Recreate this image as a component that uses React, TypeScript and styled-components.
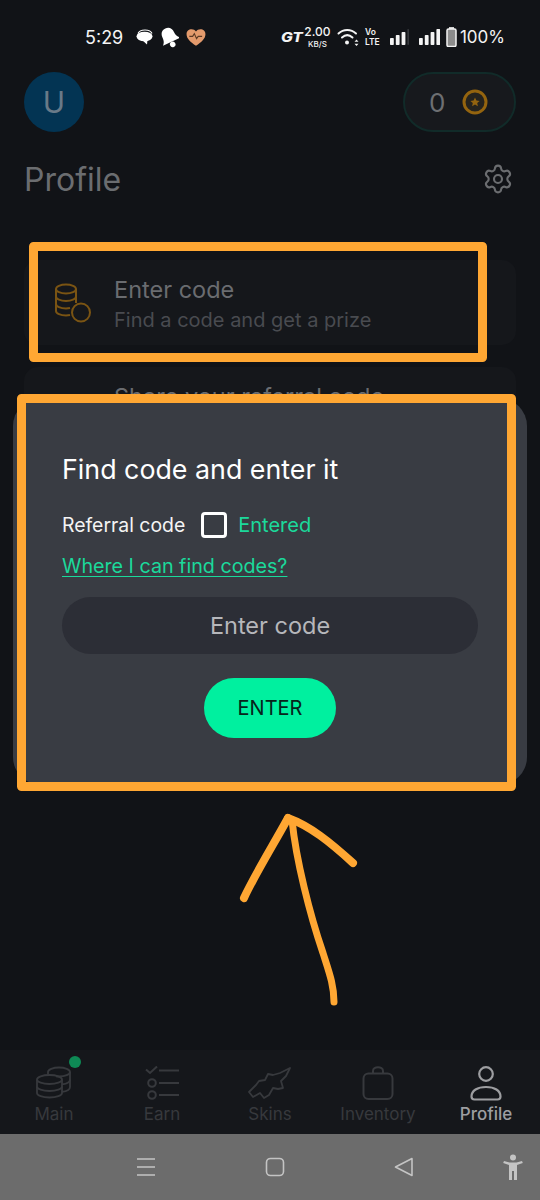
import React from 'react'
import styled, { createGlobalStyle } from 'styled-components'
import { Settings } from 'lucide-react'

const GlobalStyle = createGlobalStyle`
  html, body { margin: 0; padding: 0; background: #111317; }
  * { box-sizing: border-box; }
`

const Page = styled.div`
  position: relative;
  width: 540px;
  height: 1200px;
  overflow: hidden;
  display: flex;
  flex-direction: column;
  background: #111317;
  font-family: 'Inter', 'Noto Sans', sans-serif;
`

const StatusBar = styled.div`
  height: 72px;
  flex: none;
  padding: 26px 35px 0 85px;
  display: flex;
  justify-content: space-between;
  align-items: flex-start;
  color: #f4f4f4;
`
const StatusGroup = styled.div`
  display: flex;
  align-items: center;
  height: 22px;
`
const StatusSlot = styled.span<{ $ml: number }>`
  display: flex;
  align-items: center;
  margin-left: ${(p) => p.$ml}px;
`
const Clock = styled.span`
  font-size: 18px;
`
const BatteryText = styled.span`
  font-size: 17px;
`
const GtMark = styled.span`
  width: 21px;
  font-size: 13px;
  font-style: italic;
  font-weight: 800;
  transform: scaleX(1.2);
  transform-origin: left center;
`
const Speed = styled.div`
  display: flex;
  flex-direction: column;
  align-items: center;
  width: 25px;
  font-size: 12px;
  line-height: 14.5px;
  font-weight: 500;
  small {
    font-size: 8px;
    line-height: 10px;
  }
`
const VoLte = styled.div`
  width: 18px;
  display: flex;
  flex-direction: column;
  font-size: 8.5px;
  line-height: 10.5px;
  font-weight: 600;
`

const Header = styled.div`
  height: 60px;
  flex: none;
  padding: 0 24px;
  display: flex;
  justify-content: space-between;
  align-items: center;
`
const Avatar = styled.div`
  width: 60px;
  height: 60px;
  border-radius: 50%;
  background: #033453;
  color: #697a88;
  font-size: 30px;
  display: flex;
  align-items: center;
  justify-content: center;
`
const Points = styled.div`
  width: 113px;
  height: 60px;
  border-radius: 30px;
  border: 2px solid #112b29;
  background: #17191d;
  padding-left: 24px;
  display: flex;
  align-items: center;
  gap: 17px;
  color: #6d6f72;
  font-size: 26px;
`

const TitleRow = styled.div`
  margin-top: 27px;
  height: 40px;
  flex: none;
  padding: 0 26px 0 24px;
  display: flex;
  justify-content: space-between;
  align-items: center;
  color: #6b6d70;
`
const Title = styled.h1`
  margin: 0;
  font-size: 32px;
  font-weight: 400;
  color: #6b6d70;
`

const CardList = styled.div`
  margin-top: 61px;
  padding: 0 24px;
  display: flex;
  flex-direction: column;
  gap: 22px;
`
const Card = styled.div`
  height: 85px;
  border-radius: 14px;
  background: #15171b;
  padding-left: 30px;
  display: flex;
  align-items: center;
  gap: 22px;
`
const CardIconSlot = styled.div`
  width: 38px;
  height: 40px;
  flex: none;
`
const CardText = styled.div`
  padding-top: 3px;
  display: flex;
  flex-direction: column;
  gap: 3px;
`
const CardTitle = styled.div`
  font-size: 23.5px;
  line-height: 28px;
  color: #6a6c70;
`
const CardSub = styled.div`
  font-size: 20px;
  line-height: 26px;
  color: #494b50;
`

const Sheet = styled.div`
  position: absolute;
  left: 13px;
  top: 398px;
  width: 514px;
  height: 387px;
  border-radius: 28px;
  background: #393c43;
  padding: 52px 49px 0;
  display: flex;
  flex-direction: column;
`
const SheetTitle = styled.h2`
  margin: 0;
  font-size: 26.8px;
  line-height: 38px;
  font-weight: 400;
  color: #ffffff;
`
const CodeRow = styled.div`
  margin-top: 23px;
  height: 28px;
  display: flex;
  align-items: center;
  color: #f4f4f4;
  font-size: 19.4px;
`
const CheckBox = styled.span`
  width: 26px;
  height: 26px;
  margin: 0 11px 0 16px;
  border: 3px solid #ffffff;
  border-radius: 4px;
`
const Entered = styled.span`
  color: #1bd99b;
  font-size: 20px;
`
const HelpLink = styled.a`
  margin-top: 13px;
  font-size: 19.7px;
  line-height: 28px;
  color: #1bd99b;
  text-decoration: underline;
  text-underline-offset: 3px;
  align-self: flex-start;
`
const CodeField = styled.div`
  margin-top: 17px;
  width: 416px;
  height: 57px;
  border-radius: 29px;
  background: #2c2e36;
  color: #b6b7bb;
  font-size: 23.5px;
  display: flex;
  align-items: center;
  justify-content: center;
`
const EnterButton = styled.button`
  margin: 24px auto 0;
  width: 132px;
  height: 60px;
  border: 0;
  border-radius: 30px;
  background: #00f09f;
  color: #07251b;
  font-family: inherit;
  font-size: 20px;
`

const Annotations = styled.svg`
  position: absolute;
  left: 0;
  top: 0;
  width: 540px;
  height: 1200px;
  pointer-events: none;
`

const NavBar = styled.nav`
  margin-top: auto;
  height: 84px;
  flex: none;
  background: #15171b;
  display: grid;
  grid-template-columns: repeat(5, 108px);
`
const NavItem = styled.div<{ $active?: boolean }>`
  position: relative;
  padding-top: 16px;
  display: flex;
  flex-direction: column;
  align-items: center;
  color: ${(p) => (p.$active ? '#9d9ea1' : '#37393d')};
  font-size: 17px;
  font-weight: ${(p) => (p.$active ? 500 : 400)};
  svg { height: 36px; width: 44px; }
`
const NavDot = styled.span`
  position: absolute;
  left: 69px;
  top: 6px;
  width: 12px;
  height: 12px;
  border-radius: 50%;
  background: #0e8a55;
`
const NavLabel = styled.span`
  line-height: 24px;
`

const SystemBar = styled.div`
  height: 66px;
  flex: none;
  background: #6c6c6c;
  color: #c4c4c4;
  padding-left: 136px;
  display: flex;
  align-items: center;
  gap: 109px;
  svg:last-child { margin-left: -20px; }
`

const Bubble = () => (
  <svg width="17" height="16" viewBox="0 0 17 16">
    <path d="M2 4.500C3 2 5.500 1 9 1s6 1 7 3.500" fill="none" stroke="#fff" strokeWidth="1.200" />
    <ellipse cx="8.500" cy="7.500" rx="8" ry="4.800" fill="#fff" />
    <path d="M6 11h5.500l-.5 4.500z" fill="#fff" />
  </svg>
)

const Bell = () => (
  <svg width="19" height="21" viewBox="1 1 16 18">
    <g transform="rotate(-25 9 10)" fill="#fff">
      <path d="M9 1.500c3.500 0 5.500 2.500 5.500 6 0 3 1 4.500 3 6.500H1c2-2 2.500-3.500 2.500-6.500 0-3.500 2-6 5.500-6z" />
      <circle cx="9" cy="16.500" r="2.400" />
    </g>
  </svg>
)

const Heart = () => (
  <svg width="20" height="19" viewBox="0 0 18 16">
    <path d="M9 15.500C4 12 .5 9 .5 5 .5 2 2.500.5 5 .5c1.700 0 3 .8 4 2 1-1.200 2.300-2 4-2 2.500 0 4.500 1.500 4.500 4.500 0 4-3.500 7-8.500 10.500z" fill="#e39a6c" />
    <path d="M3 7h3l1.500-2.500L9.500 9l1.500-2h3.500" fill="none" stroke="#5c3a24" strokeWidth="1" />
  </svg>
)

const Wifi = () => (
  <svg width="22" height="19" viewBox="0 0 22 19" fill="none" stroke="#f4f4f4" strokeLinecap="round">
    <path d="M1.500 5.500C6.500 .8 14 .8 19 5.500" strokeWidth="2" />
    <path d="M5 9.500C8.300 6.500 12.200 6.500 15.500 9.500" strokeWidth="2" />
    <circle cx="10" cy="14.500" r="2" fill="#f4f4f4" stroke="none" />
    <path d="M19.500 11.500l-2 2.200h4zM19.500 18l-2-2.200h4z" fill="#f4f4f4" stroke="none" />
  </svg>
)

const Signal = ({ lit }: { lit: number }) => (
  <svg width="21" height="16" viewBox="0 0 21 16">
    {[0, 1, 2, 3].map((i) => (
      <rect
        key={i}
        x={i * 5.8}
        y={9 - i * 3}
        width={i < lit ? 3.8 : 1.5}
        height={7 + i * 3}
        rx="0.8"
        fill={i < lit ? '#f4f4f4' : '#3a3c40'}
      />
    ))}
  </svg>
)

const BatteryIcon = () => (
  <svg width="11" height="20" viewBox="0 0 11 20">
    <rect x="3" y="0" width="5" height="2" fill="#cfcfcf" />
    <rect x="1" y="2" width="9" height="17.500" rx="1.500" fill="#8b8b8b" stroke="#f4f4f4" strokeWidth="1.500" />
  </svg>
)

const StarCoin = () => (
  <svg width="26" height="26" viewBox="0 0 26 26">
    <circle cx="13" cy="13" r="11" fill="#25231e" stroke="#94640f" strokeWidth="3" />
    <path d="M13 8.500l1.400 3 3.200.4-2.400 2.100.7 3.200-2.900-1.600-2.900 1.600.7-3.200-2.400-2.100 3.200-.4z" fill="#94640f" />
  </svg>
)

const CoinsIcon = () => (
  <svg width="38" height="40" viewBox="0 0 38 40" fill="none" stroke="#7a5413" strokeWidth="2">
    <ellipse cx="12" cy="6" rx="10" ry="4.500" />
    <path d="M2 6v22c0 2.500 4.500 4.500 10 4.500 1.500 0 2.500-.1 4-.4" />
    <path d="M22 6v14" />
    <path d="M2 13.500c0 2.500 4.500 4.500 10 4.500s10-2 10-4.500" />
    <path d="M2 21c0 2.500 4.500 4.500 10 4.500 1.500 0 2.500-.1 4-.4" />
    <circle cx="27" cy="29.500" r="9" />
  </svg>
)

const MainIcon = () => (
  <svg viewBox="0 0 44 36" fill="none" stroke="currentColor" strokeWidth="1.800">
    <path d="M16 8.500V6c0-2.500 5-4.500 11-4.500S38 3.500 38 6s-5 4.500-11 4.500c-1 0-2-.1-3-.2" />
    <path d="M38 6v15c0 2.500-3 4.300-8 4.800" />
    <path d="M38 13.500c0 2.500-3 4.300-8 4.800" />
    <ellipse cx="17.500" cy="13.500" rx="12.500" ry="4.500" />
    <path d="M5 13.500V27c0 2.500 5.500 4.500 12.500 4.500S30 29.500 30 27V13.500" />
    <path d="M5 20.500c0 2.500 5.500 4.500 12.500 4.500S30 23 30 20.500" />
  </svg>
)

const EarnIcon = () => (
  <svg viewBox="0 0 44 36" fill="none" stroke="currentColor" strokeWidth="2">
    <path d="M6 3.500L10 7l7-6.500" />
    <path d="M19 4.500h20M19 17h20M19 29h20" />
    <circle cx="12" cy="17" r="3.800" />
    <circle cx="12" cy="29" r="3.800" />
  </svg>
)

const SkinsIcon = () => (
  <svg viewBox="0 0 44 36" fill="none" stroke="currentColor" strokeWidth="1.800" strokeLinejoin="round">
    <path d="M42 2L38 10L33 15L35 22L30 23L25 22L21 29L16 32L12 27L5 31L1 26L8 19L11 15L17 14L20 8L25 9L32 7z" />
  </svg>
)

const BagIcon = () => (
  <svg viewBox="0 0 44 36" fill="none" stroke="currentColor" strokeWidth="2">
    <rect x="7.500" y="7.500" width="29" height="25.500" rx="5" />
    <path d="M17 7.500V5c0-5 10-5 10 0v2.500" />
  </svg>
)

const PersonIcon = () => (
  <svg viewBox="0 0 44 36" fill="none" stroke="currentColor" strokeWidth="2.200">
    <circle cx="22" cy="8" r="6.800" />
    <path d="M7.500 30.500c0-6 6-9.500 14.500-9.500s14.500 3.500 14.500 9.500c0 2-1 3-3 3h-23c-2 0-3-1-3-3z" />
  </svg>
)

const App: React.FC = () => {
  return (
    <Page>
      <GlobalStyle />
      <StatusBar>
        <StatusGroup>
          <Clock>5:29</Clock>
          <StatusSlot $ml={13}><Bubble /></StatusSlot>
          <StatusSlot $ml={7}><Bell /></StatusSlot>
          <StatusSlot $ml={7}><Heart /></StatusSlot>
        </StatusGroup>
        <StatusGroup>
          <GtMark>GT</GtMark>
          <StatusSlot $ml={3}>
            <Speed>
              2.00
              <small>KB/S</small>
            </Speed>
          </StatusSlot>
          <StatusSlot $ml={7}><Wifi /></StatusSlot>
          <StatusSlot $ml={6}>
            <VoLte>
              <span>Vo</span>
              <span>LTE</span>
            </VoLte>
          </StatusSlot>
          <StatusSlot $ml={7}><Signal lit={3} /></StatusSlot>
          <StatusSlot $ml={8}><Signal lit={4} /></StatusSlot>
          <StatusSlot $ml={6}><BatteryIcon /></StatusSlot>
          <StatusSlot $ml={3}><BatteryText>100%</BatteryText></StatusSlot>
        </StatusGroup>
      </StatusBar>

      <Header>
        <Avatar>U</Avatar>
        <Points>
          0
          <StarCoin />
        </Points>
      </Header>

      <TitleRow>
        <Title>Profile</Title>
        <Settings size={32} strokeWidth={1.6} />
      </TitleRow>

      <CardList>
        <Card>
          <CardIconSlot>
            <CoinsIcon />
          </CardIconSlot>
          <CardText>
            <CardTitle>Enter code</CardTitle>
            <CardSub>Find a code and get a prize</CardSub>
          </CardText>
        </Card>
        <Card>
          <CardIconSlot />
          <CardText>
            <CardTitle>Share your referral code</CardTitle>
            <CardSub>Invite a friend</CardSub>
          </CardText>
        </Card>
      </CardList>

      <NavBar>
        <NavItem>
          <NavDot />
          <MainIcon />
          <NavLabel>Main</NavLabel>
        </NavItem>
        <NavItem>
          <EarnIcon />
          <NavLabel>Earn</NavLabel>
        </NavItem>
        <NavItem>
          <SkinsIcon />
          <NavLabel>Skins</NavLabel>
        </NavItem>
        <NavItem>
          <BagIcon />
          <NavLabel>Inventory</NavLabel>
        </NavItem>
        <NavItem $active>
          <PersonIcon />
          <NavLabel>Profile</NavLabel>
        </NavItem>
      </NavBar>

      <SystemBar>
        <svg width="20" height="20" viewBox="0 0 20 20" stroke="currentColor" strokeWidth="1.500">
          <path d="M1 2h18M1 10h18M1 18h18" />
        </svg>
        <svg width="20" height="20" viewBox="0 0 20 20" fill="none" stroke="currentColor" strokeWidth="1.600">
          <rect x="1.500" y="1.500" width="17" height="17" rx="4" />
        </svg>
        <svg width="20" height="20" viewBox="0 0 20 20" fill="none" stroke="currentColor" strokeWidth="1.600" strokeLinejoin="round">
          <path d="M18 1.500v17L1.500 10z" />
        </svg>
        <svg width="20" height="26" viewBox="0 0 20 26" fill="currentColor">
          <circle cx="10" cy="3.500" r="3" />
          <path d="M1 7l5.500 1.500h7L19 7l.8 2-5.800 2v15h-3v-9h-2v9H6V11L.2 9z" />
        </svg>
      </SystemBar>

      <Sheet>
        <SheetTitle>Find code and enter it</SheetTitle>
        <CodeRow>
          Referral code
          <CheckBox />
          <Entered>Entered</Entered>
        </CodeRow>
        <HelpLink>Where I can find codes?</HelpLink>
        <CodeField>Enter code</CodeField>
        <EnterButton>ENTER</EnterButton>
      </Sheet>

      <Annotations viewBox="0 0 540 1200" fill="none" stroke="#ffa733" strokeLinejoin="round" strokeLinecap="round">
        <rect x="33.500" y="246.500" width="449" height="111" strokeWidth="9" />
        <rect x="21.500" y="398.500" width="490" height="388" strokeWidth="9" />
        <path d="M288 818C275 842 254 876 244 898" strokeWidth="8" />
        <path d="M288 818C310 826 330 842 353 863" strokeWidth="8" />
        <path d="M292 820C296 860 310 915 323 953C329 972 334 985 334 1002" strokeWidth="7" />
      </Annotations>
    </Page>
  )
}

export default App
